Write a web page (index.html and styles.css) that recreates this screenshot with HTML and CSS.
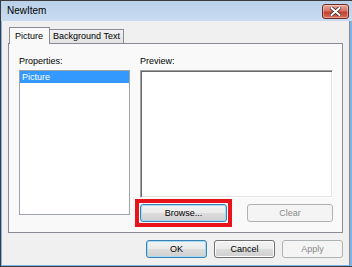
FILE: index.html
```html
<!DOCTYPE html>
<html lang="en">
<head>
    <meta charset="utf-8">
    <title>NewItem</title>
    <link rel="stylesheet" href="styles.css">
</head>
<body>

<div class="window">
    <div class="titlebar">
        <span class="title">NewItem</span>
        <button class="close" title="Close">
            <svg width="11" height="9" viewBox="0 0 11 9">
                <path d="M1.5 1 L9.5 8 M9.5 1 L1.5 8" stroke="#3a2020" stroke-width="3.6" stroke-linecap="round"/>
                <path d="M1.5 1 L9.5 8 M9.5 1 L1.5 8" stroke="#ffffff" stroke-width="2.1" stroke-linecap="round"/>
            </svg>
        </button>
    </div>

    <div class="client">
        <div class="tabs">
            <div class="tab active">Picture</div>
            <div class="tab">Background Text</div>
        </div>

        <div class="panel">
            <div class="col col-props">
                <div class="label">Properties:</div>
                <div class="listbox">
                    <div class="item selected">Picture</div>
                </div>
            </div>
            <div class="col col-preview">
                <div class="label">Preview:</div>
                <div class="preview"></div>
                <div class="preview-actions">
                    <span class="highlight">
                        <button class="btn btn-browse focused">Browse...</button>
                    </span>
                    <button class="btn btn-clear" disabled>Clear</button>
                </div>
            </div>
        </div>

        <div class="footer">
            <button class="btn focused">OK</button>
            <button class="btn">Cancel</button>
            <button class="btn" disabled>Apply</button>
        </div>
    </div>
</div>

</body>
</html>
```

FILE: styles.css
```css
* {
    margin: 0;
    padding: 0;
    box-sizing: border-box;
}

body {
    font-family: "Liberation Sans", Arial, sans-serif;
    font-size: 9px;
    color: #000000;
    background-color: #f0f0f0;
}

.window {
    display: flex;
    flex-direction: column;
    width: 352px;
    height: 267px;
    border-top: 1px solid #3c3c3c;
    border-left: 1px solid #3c3c3c;
    border-bottom: 1px solid #3c3c3c;
    background-color: #7fb4e8;
}

.titlebar {
    display: flex;
    justify-content: space-between;
    align-items: flex-start;
    height: 20px;
    padding: 3px 3px 0 6px;
    background: linear-gradient(#b9d1ea, #c9dcf0);
}

.title {
    font-size: 10px;
    line-height: 14px;
}

.close {
    display: flex;
    align-items: center;
    justify-content: center;
    width: 27px;
    height: 15px;
    border: 1px solid #6f2b24;
    border-radius: 3px;
    background: linear-gradient(#e9a99b, #d47467 45%, #c2412f 55%, #d8705c);
    box-shadow: inset 0 0 0 1px rgba(255, 255, 255, 0.35);
}

.client {
    flex: 1;
    margin: 0 2px 1px 1px;
    padding: 6px 6px 0 6px;
    border-right: 1px solid #8a8a8a;
    background-color: #f0f0f0;
}

.tabs {
    display: flex;
    align-items: flex-end;
    height: 16px;
    padding-left: 1px;
}

.tab {
    height: 14px;
    padding: 0 3px;
    line-height: 12px;
    border: 1px solid #898c95;
    border-bottom: none;
    background: linear-gradient(#f2f2f2, #e3e3e3);
}

.tab.active {
    position: relative;
    z-index: 1;
    height: 17px;
    margin-bottom: -1px;
    margin-right: -1px;
    padding: 2px 6px 0 5px;
    background: #f9f9f9;
}

.panel {
    display: flex;
    gap: 10px;
    height: 190px;
    padding: 12px 9px 0 10px;
    border: 1px solid #898c95;
    background-color: #f9f9f9;
}

.col {
    display: flex;
    flex-direction: column;
}

.col-props {
    width: 111px;
}

.col-preview {
    width: 193px;
}

.label {
    height: 14px;
    line-height: 10px;
}

.listbox {
    height: 145px;
    border: 1px solid #9ea3ac;
    background-color: #ffffff;
}

.item {
    height: 12px;
    padding-left: 2px;
    line-height: 12px;
}

.item.selected {
    color: #ffffff;
    background-color: #3399ff;
}

.preview {
    height: 128px;
    border: 1px solid;
    border-color: #a0a0a0 #ffffff #ffffff #a0a0a0;
    box-shadow: inset 1px 1px #696969, inset -1px -1px #e3e3e3;
    background-color: #ffffff;
}

.preview-actions {
    display: flex;
    justify-content: space-between;
    align-items: flex-start;
    margin-top: 6px;
}

.btn {
    height: 18px;
    font-family: inherit;
    font-size: 9px;
    color: #000000;
    border: 1px solid #707070;
    border-radius: 3px;
    background: linear-gradient(#f2f2f2, #ebebeb 50%, #dddddd 50%, #cfcfcf);
    box-shadow: inset 0 0 0 1px #fcfcfc;
}

.btn.focused {
    border-color: #3c7fb1;
    box-shadow: inset 0 0 0 1px #9fdcf8;
}

.btn:disabled {
    color: #8a8a8a;
    border-color: #adb2b5;
    background: #f4f4f4;
    box-shadow: none;
}

.btn-browse {
    display: block;
    width: 87px;
}

.btn-clear {
    width: 86px;
}

/* red marker box around the Browse button, kept out of the layout */
.highlight {
    display: block;
    margin: -5px -5px -5px -5px;
    padding: 1px;
    border: 4px solid #e8141c;
}

.footer {
    display: flex;
    justify-content: flex-end;
    gap: 7px;
    margin-top: 7px;
}

.footer .btn {
    width: 61px;
}
```
